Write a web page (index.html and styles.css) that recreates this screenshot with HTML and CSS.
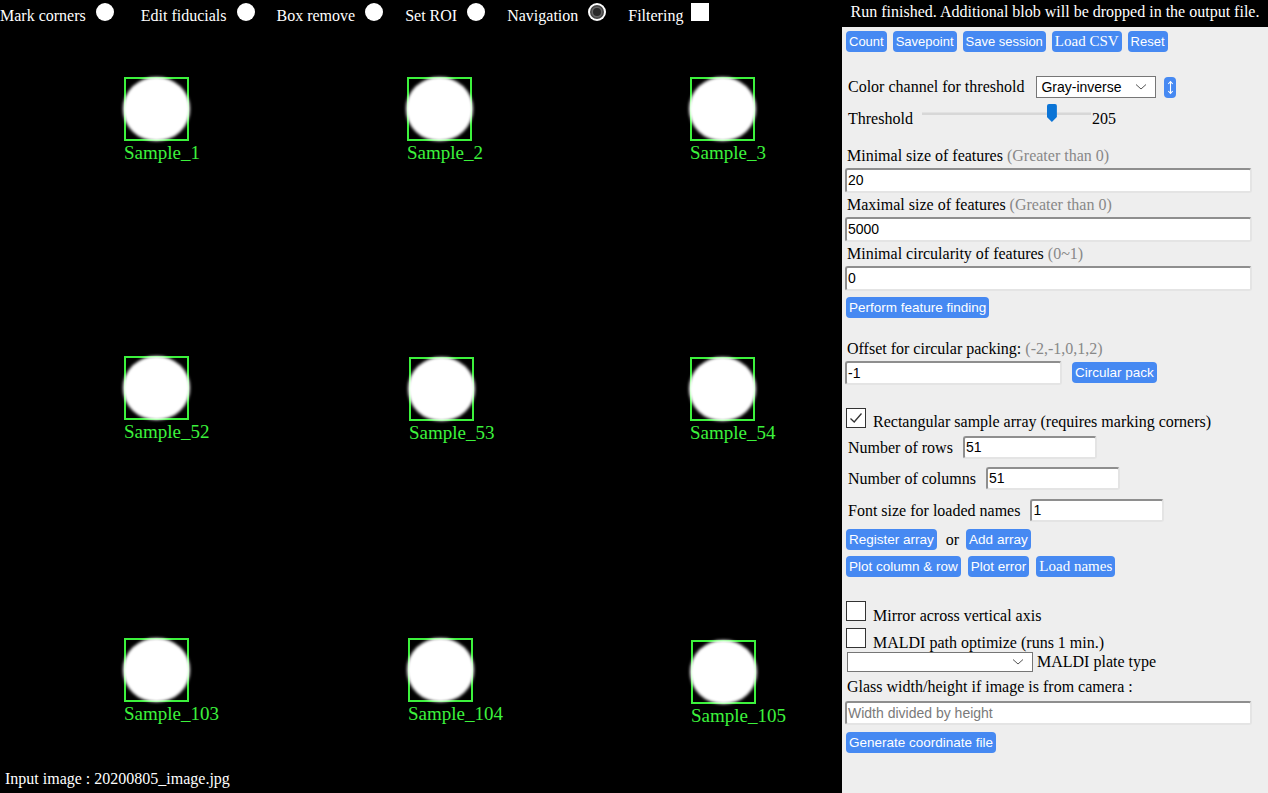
FILE: index.html
```html
<!DOCTYPE html>
<html>
<head>
<meta charset="utf-8">
<link rel="stylesheet" href="styles.css">
</head>
<body>
<div class="app">
  <div class="viewer">
    <div class="modes">
      <span class="mode-label">Mark corners</span><span class="radio r-first"></span>
      <span class="mode-label">Edit fiducials</span><span class="radio"></span>
      <span class="mode-label">Box remove</span><span class="radio"></span>
      <span class="mode-label">Set ROI</span><span class="radio"></span>
      <span class="mode-label">Navigation</span><span class="radio checked"><span class="dot"></span></span>
      <span class="mode-label">Filtering</span><span class="mode-check"></span>
    </div>
    <div class="canvas">
      <div class="sample s1"><div class="box"><div class="blob"></div></div><div class="name">Sample_1</div></div>
      <div class="sample s2"><div class="box"><div class="blob"></div></div><div class="name">Sample_2</div></div>
      <div class="sample s3"><div class="box"><div class="blob"></div></div><div class="name">Sample_3</div></div>
      <div class="sample s52"><div class="box"><div class="blob"></div></div><div class="name">Sample_52</div></div>
      <div class="sample s53"><div class="box"><div class="blob"></div></div><div class="name">Sample_53</div></div>
      <div class="sample s54"><div class="box"><div class="blob"></div></div><div class="name">Sample_54</div></div>
      <div class="sample s103"><div class="box"><div class="blob"></div></div><div class="name">Sample_103</div></div>
      <div class="sample s104"><div class="box"><div class="blob"></div></div><div class="name">Sample_104</div></div>
      <div class="sample s105"><div class="box"><div class="blob"></div></div><div class="name">Sample_105</div></div>
    </div>
    <div class="caption">Input image : 20200805_image.jpg</div>
  </div>

  <div class="side">
    <div class="status">Run finished. Additional blob will be dropped in the output file.</div>
    <div class="panel">
      <div class="btn-row top-btns">
        <span class="btn">Count</span>
        <span class="btn">Savepoint</span>
        <span class="btn">Save session</span>
        <span class="btn serif">Load CSV</span>
        <span class="btn">Reset</span>
      </div>

      <div class="row color-row">
        <span class="label">Color channel for threshold</span>
        <span class="select sel-channel"><span class="sel-text">Gray-inverse</span>
          <svg class="chev" width="12" height="8" viewBox="0 0 12 8"><path d="M1 1.5 L6 6 L11 1.5" fill="none" stroke="#555" stroke-width="1"/></svg>
        </span>
        <span class="swap-btn">
          <svg width="11" height="21" viewBox="0 0 11 21"><path d="M5.5 4.5 V16.5 M3.3 7 L5.5 4.5 L7.7 7 M3.3 14 L5.5 16.5 L7.7 14" fill="none" stroke="#fff" stroke-width="1.1"/></svg>
        </span>
      </div>

      <div class="row thresh-row">
        <span class="label">Threshold</span>
        <span class="slider"><span class="track"></span><span class="thumb"></span></span>
        <span class="label val">205</span>
      </div>

      <div class="field-label first">Minimal size of features <span class="hint">(Greater than 0)</span></div>
      <div class="input wide">20</div>
      <div class="field-label">Maximal size of features <span class="hint">(Greater than 0)</span></div>
      <div class="input wide">5000</div>
      <div class="field-label">Minimal circularity of features <span class="hint">(0~1)</span></div>
      <div class="input wide">0</div>
      <div class="btn-row perform"><span class="btn">Perform feature finding</span></div>

      <div class="field-label offset-label">Offset for circular packing: <span class="hint">(-2,-1,0,1,2)</span></div>
      <div class="row offset-row">
        <div class="input offset-input">-1</div>
        <span class="btn">Circular pack</span>
      </div>

      <div class="check-row rect-row">
        <span class="checkbox on">
          <svg width="18" height="18" viewBox="0 0 18 18"><path d="M3.5 9.5 L7.2 13 L14.5 4.5" fill="none" stroke="#333" stroke-width="1.3"/></svg>
        </span>
        <span class="label">Rectangular sample array (requires marking corners)</span>
      </div>

      <div class="row num-row r1">
        <span class="label">Number of rows</span>
        <div class="input num">51</div>
      </div>
      <div class="row num-row r2">
        <span class="label">Number of columns</span>
        <div class="input num">51</div>
      </div>
      <div class="row num-row r3">
        <span class="label">Font size for loaded names</span>
        <div class="input num">1</div>
      </div>

      <div class="btn-row reg-row">
        <span class="btn">Register array</span>
        <span class="label or">or</span>
        <span class="btn">Add array</span>
      </div>
      <div class="btn-row plot-row">
        <span class="btn">Plot column &amp; row</span>
        <span class="btn">Plot error</span>
        <span class="btn serif">Load names</span>
      </div>

      <div class="check-row mirror-row">
        <span class="checkbox"></span>
        <span class="label">Mirror across vertical axis</span>
      </div>
      <div class="check-row maldi-row">
        <span class="checkbox"></span>
        <span class="label">MALDI path optimize (runs 1 min.)</span>
      </div>
      <div class="row plate-row">
        <span class="select sel-plate">
          <svg class="chev" width="12" height="8" viewBox="0 0 12 8"><path d="M1 1.5 L6 6 L11 1.5" fill="none" stroke="#555" stroke-width="1"/></svg>
        </span>
        <span class="label">MALDI plate type</span>
      </div>
      <div class="field-label glass-label">Glass width/height if image is from camera :</div>
      <div class="input wide placeholder">Width divided by height</div>
      <div class="btn-row gen-row"><span class="btn">Generate coordinate file</span></div>
    </div>
  </div>
</div>
</body>
</html>
```
FILE: styles.css
```css
html, body {
  margin: 0;
  padding: 0;
  background: #000;
}
body {
  font-family: "Liberation Serif", "Times New Roman", serif;
  font-size: 16px;
}
.app {
  display: flex;
  width: 1268px;
  height: 793px;
  overflow: hidden;
}

/* ---------- viewer ---------- */
.viewer {
  width: 842px;
  display: flex;
  flex-direction: column;
  color: #fff;
}
.modes {
  height: 27px;
  display: flex;
  align-items: flex-start;
  padding-top: 3px;
  box-sizing: border-box;
}
.mode-label {
  line-height: 18px;
  margin-top: 4px;
}
.radio {
  width: 18px;
  height: 18px;
  border-radius: 50%;
  background: #fff;
  margin: 0 22px 0 10px;
  display: flex;
  align-items: center;
  justify-content: center;
  box-sizing: border-box;
}
.radio.r-first { margin-right: 27px; }
.radio.checked .dot {
  width: 14px;
  height: 14px;
  border-radius: 50%;
  background: #444;
  display: flex;
  align-items: center;
  justify-content: center;
}
.radio.checked .dot::after {
  content: "";
  width: 8px;
  height: 8px;
  border-radius: 50%;
  background: #2a2a2a;
  box-shadow: 0 0 0 1.5px #666;
}
.mode-check {
  width: 18px;
  height: 18px;
  background: #fff;
  margin-left: 8px;
}
.canvas {
  position: relative;
  flex: 1;
}
.sample {
  position: absolute;
  display: flex;
  flex-direction: column;
  align-items: flex-start;
}
.s1 { left: 124px; top: 50px; }
.s2 { left: 407px; top: 50px; }
.s3 { left: 690px; top: 50px; }
.s52 { left: 124px; top: 329px; }
.s53 { left: 409px; top: 330px; }
.s54 { left: 690px; top: 330px; }
.s103 { left: 124px; top: 611px; }
.s104 { left: 408px; top: 611px; }
.s105 { left: 691px; top: 613px; }
.box {
  width: 65px;
  height: 64px;
  box-sizing: border-box;
  border: 2px solid #3cf23c;
  position: relative;
}
.blob {
  position: absolute;
  left: -3px;
  top: -2px;
  width: 67px;
  height: 64px;
  border-radius: 50%;
  background: #fff;
  filter: blur(1.4px);
}
.name {
  color: #3cf23c;
  font-size: 19px;
  line-height: 23px;
  white-space: nowrap;
}
.caption {
  height: 33px;
  padding-left: 5px;
  line-height: 37px;
}

/* ---------- side panel ---------- */
.side {
  width: 426px;
  display: flex;
  flex-direction: column;
}
.status {
  height: 27px;
  color: #fff;
  text-align: center;
  line-height: 24px;
  white-space: nowrap;
}
.panel {
  flex: 1;
  background: #eeeeee;
  padding: 0 16px 0 3px;
  color: #000;
}
.btn-row {
  display: flex;
  align-items: center;
  gap: 7px;
  padding-left: 1px;
}
.btn {
  display: inline-flex;
  align-items: center;
  height: 21px;
  padding: 0 3px;
  background: #4689f2;
  color: #fff;
  border-radius: 4px;
  font-family: "Liberation Sans", Arial, sans-serif;
  font-size: 13.5px;
  white-space: nowrap;
  box-sizing: border-box;
}
.top-btns { margin-top: 4px; height: 21px; gap: 6px; }
.top-btns .btn { font-size: 13px; }
.btn.serif,
.top-btns .btn.serif {
  font-family: "Liberation Serif", "Times New Roman", serif;
  font-size: 15px;
  padding: 0 3px;
}
.row {
  display: flex;
  align-items: center;
}
.label {
  white-space: nowrap;
}
.color-row {
  margin-top: 24px;
  height: 22px;
  padding-left: 3px;
}
.select {
  position: relative;
  display: flex;
  align-items: center;
  background: #fff;
  border: 1px solid #767676;
  box-sizing: border-box;
  font-family: "Liberation Sans", Arial, sans-serif;
  font-size: 14px;
}
.sel-channel {
  width: 120px;
  height: 22px;
  margin-left: 12px;
  padding-left: 4px;
}
.chev {
  position: absolute;
  right: 8px;
  top: 50%;
  margin-top: -4px;
}
.swap-btn {
  width: 12px;
  height: 21px;
  margin-left: 8px;
  background: #4689f2;
  border-radius: 4px;
  display: flex;
  align-items: center;
  justify-content: center;
}
.thresh-row {
  margin-top: 5px;
  height: 26px;
  padding-left: 3px;
  align-items: flex-end;
}
.thresh-row .label { line-height: 20px; }
.slider {
  position: relative;
  width: 169px;
  height: 26px;
  margin-left: 9px;
}
.track {
  position: absolute;
  left: 0;
  right: 0;
  top: 9px;
  height: 2px;
  background: #d7d7d7;
  border-top: 1px solid #e2e2e2;
}
.thumb {
  position: absolute;
  left: 125px;
  top: 1px;
  width: 10px;
  height: 18px;
  background: #0b74d6;
  clip-path: polygon(0 0, 100% 0, 100% 72%, 50% 100%, 0 72%);
  border-radius: 2px 2px 0 0;
}
.val { margin-left: 1px; }

.field-label {
  height: 24px;
  line-height: 24px;
  padding-left: 2px;
  white-space: nowrap;
}
.field-label.first { margin-top: 15px; }
.hint { color: #888; }
.input {
  height: 25px;
  box-sizing: border-box;
  background: #fff;
  border: 2px solid;
  border-color: #8e8e8e #e4e4e4 #e4e4e4 #8e8e8e;
  border-radius: 3px;
  padding-left: 1px;
  font-family: "Liberation Sans", Arial, sans-serif;
  font-size: 14px;
  line-height: 21px;
  color: #000;
  white-space: nowrap;
}
.input.wide { width: 407px; }
.input.placeholder { color: #7a7a7a; height: 24px; margin-top: 2px; line-height: 20px; }
.perform { margin-top: 6px; }
.offset-label { margin-top: 19px; }
.offset-row { height: 24px; align-items: flex-start; }
.offset-input { width: 217px; height: 24px; }
.offset-row .btn { margin-left: 10px; margin-top: 1px; }

.check-row {
  display: flex;
  align-items: baseline;
  height: 24px;
  padding-left: 1px;
}
.checkbox {
  width: 20px;
  height: 20px;
  box-sizing: border-box;
  border: 1px solid #333;
  background: #fff;
  display: inline-flex;
  align-items: center;
  justify-content: center;
  margin-right: 7px;
}
.rect-row { margin-top: 23px; }
.num-row { height: 23px; padding-left: 3px; }
.num-row .input { width: 134px; height: 23px; margin-left: 10px; line-height: 19px; }
.r1 { margin-top: 4px; }
.r2 { margin-top: 8px; }
.r3 { margin-top: 9px; }
.reg-row { margin-top: 7px; gap: 0; }
.reg-row .or { margin: 0 7px 0 9px; }
.plot-row { margin-top: 6px; gap: 7px; }
.mirror-row { margin-top: 24px; }
.maldi-row { margin-top: 3px; }
.plate-row { height: 20px; }
.sel-plate {
  width: 186px;
  height: 20px;
  margin-left: 2px;
  margin-right: 4px;
}
.glass-label { margin-top: 3px; }
.gen-row { margin-top: 7px; }
```
